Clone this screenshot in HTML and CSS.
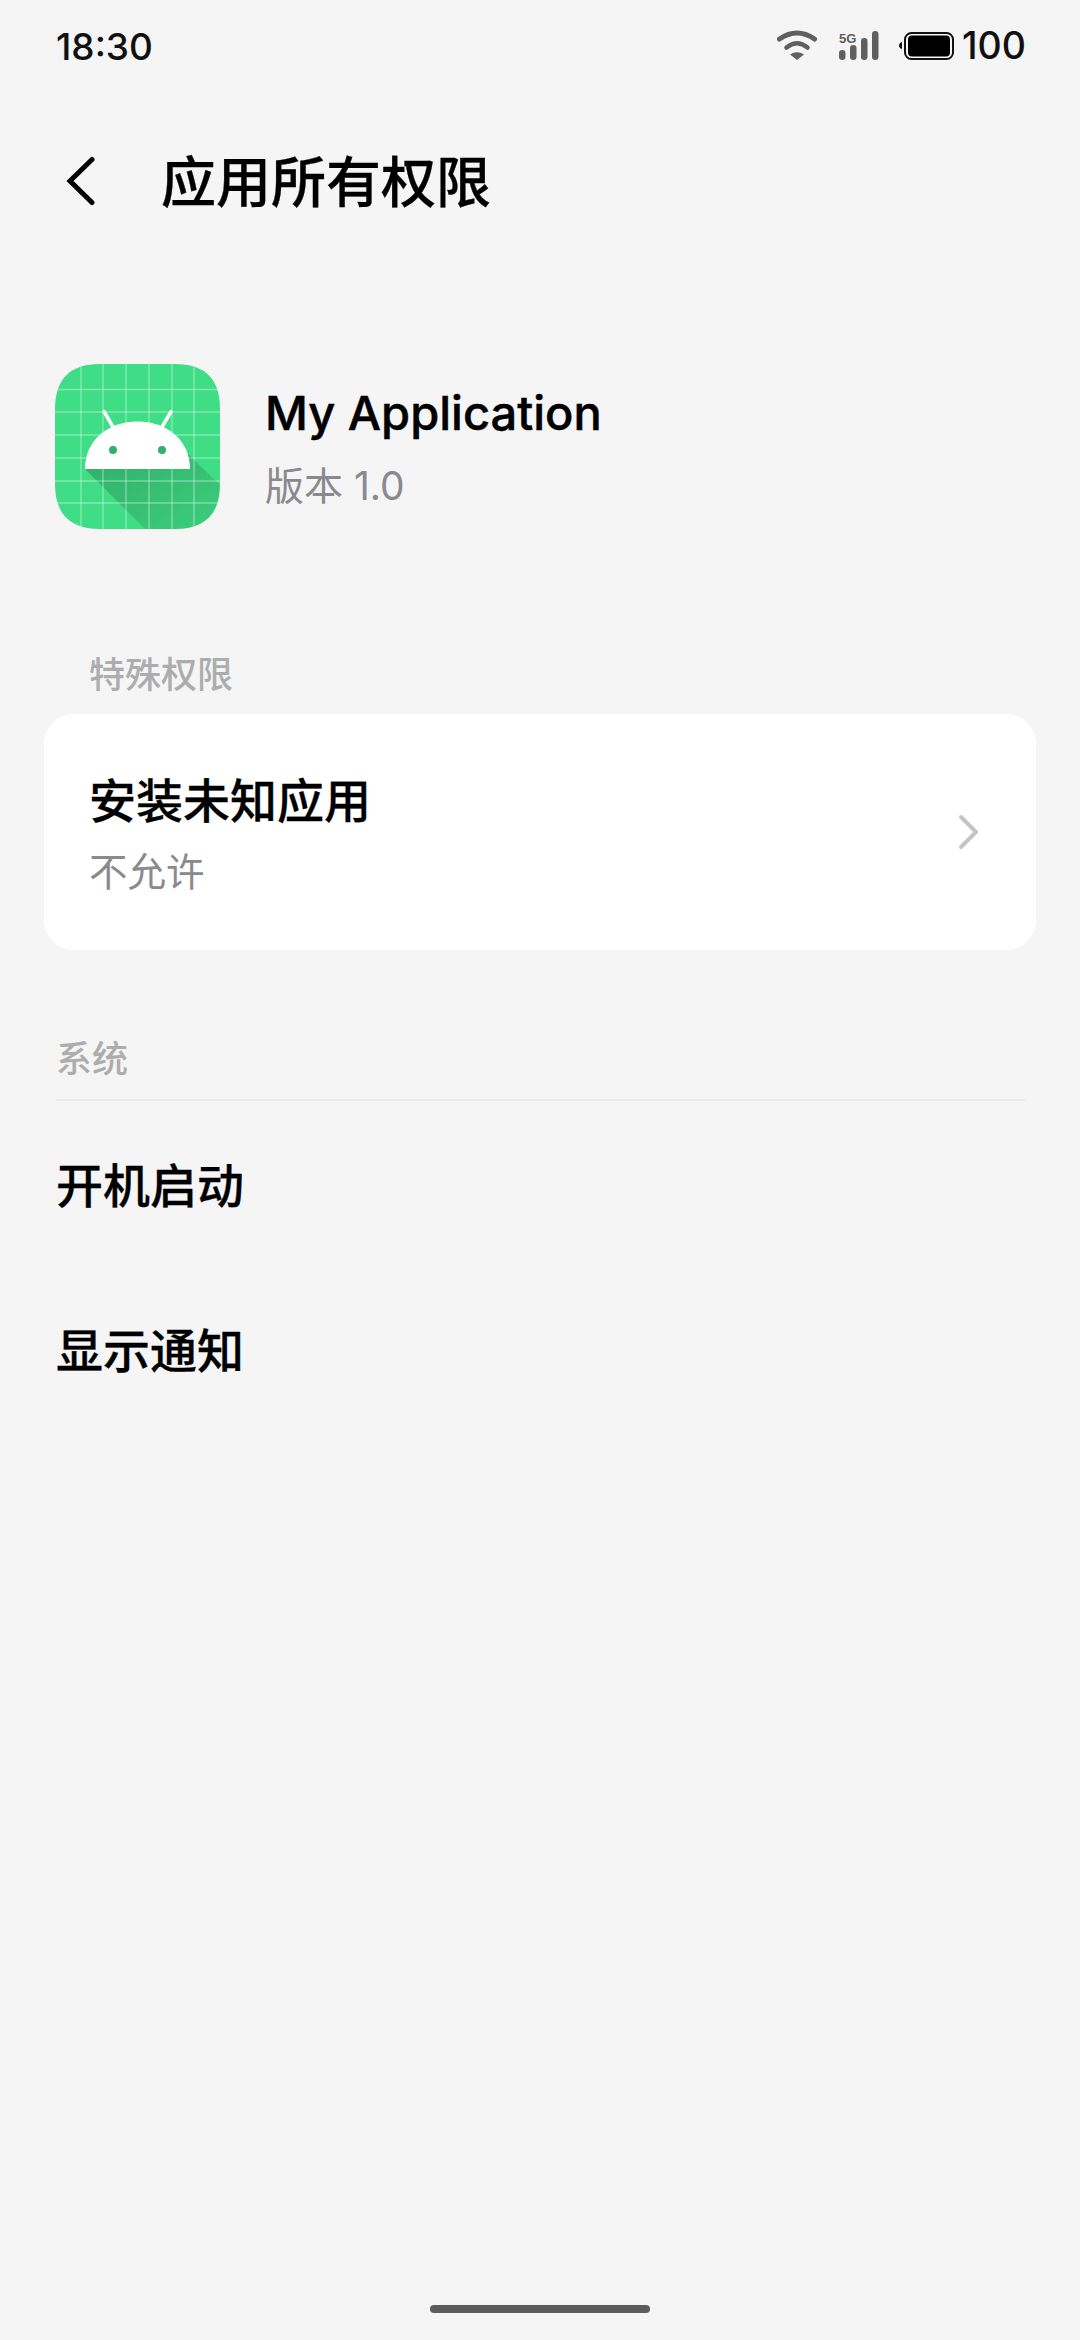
FILE: index.html
```html
<!DOCTYPE html>
<html lang="zh-CN">
<head>
<meta charset="utf-8">
<title>应用所有权限</title>
<link rel="stylesheet" href="styles.css">
</head>
<body>
<div class="page">
  <header class="status">
    <span class="time">18:30</span>
    <div class="status-right">
      <svg class="ic-wifi" width="40" height="30" viewBox="0 0 40 30"><path d="M2.500 9Q20 -3 37.500 9" fill="none" stroke="#5f5f5f" stroke-width="5" stroke-linecap="round"/><path d="M9.500 17.500Q20 9 30.500 17.500" fill="none" stroke="#5f5f5f" stroke-width="4.500" stroke-linecap="round"/><path d="M13 24.500Q20 20 27 24.500L20 30Z" fill="#5f5f5f"/></svg>
      <svg class="ic-signal" width="42" height="30" viewBox="0 0 42 30"><text x="1" y="12.500" class="fiveg">5G</text><rect x="1" y="20" width="6.500" height="10" rx="3.200" fill="#5f5f5f"/><rect x="12" y="15" width="6.500" height="15" rx="3.200" fill="#5f5f5f"/><rect x="23" y="8" width="6.500" height="22" rx="3.200" fill="#5f5f5f"/><rect x="34" y="1" width="6.500" height="29" rx="3.200" fill="#5f5f5f"/></svg>
      <svg class="ic-batt" width="56" height="30" viewBox="0 0 56 30"><path d="M4 12V19C2 18.500 1 17 1 15.500S2 12.500 4 12Z" fill="#111"/><rect x="7" y="3" width="48" height="26" rx="6.500" fill="none" stroke="#111" stroke-width="2"/><rect x="10" y="5.500" width="42" height="21" rx="4" fill="#000"/></svg>
      <span class="batt-num">100</span>
    </div>
  </header>

  <div class="toolbar">
    <svg class="back" width="30" height="50" viewBox="0 0 30 50"><path d="M27 3.500L5 25L27 46.500" fill="none" stroke="#000" stroke-width="5" stroke-linecap="round"/></svg>
    <h1 class="title">应用所有权限</h1>
  </div>

  <section class="app">
    <svg class="app-icon" width="165" height="165" viewBox="0 0 165 165">
      <defs>
        <clipPath id="sq"><path d="M45 0H120C150 0 165 15 165 45V120C165 150 150 165 120 165H45C15 165 0 150 0 120V45C0 15 15 0 45 0Z"/></clipPath>
        <linearGradient id="shade" x1="0.100" y1="0.100" x2="0.900" y2="0.900"><stop offset="0" stop-color="#000" stop-opacity=".2"/><stop offset="1" stop-color="#000" stop-opacity=".08"/></linearGradient>
      </defs>
      <g clip-path="url(#sq)">
        <rect width="165" height="165" fill="#3fdd86"/>
        <path d="M30 105L90 165H165V121L132 89Z" fill="url(#shade)"/>
        <g stroke="#fff" stroke-opacity=".35" stroke-width="1.500">
          <path d="M26 0V165M48 0V165M71 0V165M94 0V165M117 0V165M139 0V165"/>
          <path d="M0 25.500H165M0 48H165M0 71H165M0 94H165M0 117H165M0 139H165"/>
        </g>
      </g>
      <path d="M30 105C30 76 53 57.500 82.500 57.500S135 76 135 105Z" fill="#fff"/>
      <path d="M49 47.500L58 63M116 47.500L107 63" stroke="#fff" stroke-width="3.500" stroke-linecap="round"/>
      <circle cx="58" cy="86" r="4" fill="#2eb06f"/>
      <circle cx="107" cy="86" r="4" fill="#2eb06f"/>
    </svg>
    <div class="app-text">
      <div class="app-name">My Application</div>
      <div class="app-ver">版本 1.0</div>
    </div>
  </section>

  <div class="label label-card">特殊权限</div>
  <div class="card">
    <div class="card-text">
      <div class="row-title">安装未知应用</div>
      <div class="row-sub">不允许</div>
    </div>
    <svg class="chev" width="22" height="38" viewBox="0 0 22 38"><path d="M3 4L18 19L3 34" fill="none" stroke="#c4c4c4" stroke-width="4" stroke-linecap="round" stroke-linejoin="round"/></svg>
  </div>

  <div class="label label-sys">系统</div>
  <div class="rows">
    <div class="row">开机启动</div>
    <div class="row">显示通知</div>
  </div>

  <div class="spacer"></div>
  <div class="home"></div>
</div>
</body>
</html>
```

FILE: styles.css
```css
* { box-sizing: border-box; margin: 0; padding: 0; }
html, body { width: 1080px; height: 2340px; background: #f5f5f5; overflow: hidden; }
body { font-family: Inter, "Noto Sans CJK SC", sans-serif; color: #000; }
.page { width: 1080px; height: 2340px; display: flex; flex-direction: column; }
.status { height: 90px; padding: 25px 54px 0 56px; display: flex; justify-content: space-between; align-items: flex-start; }
.time { font-size: 37px; line-height: 44px; font-weight: 500; color: #111; }
.status-right { display: flex; align-items: center; height: 40px; }
.ic-wifi { margin-right: 21px; }
.ic-signal { margin-right: 18px; }
.ic-batt { margin-right: 8px; }
.batt-num { font-size: 37.500px; line-height: 44px; font-weight: 500; color: #111; margin-top: 2px; }
.fiveg { font-family: "Liberation Sans", sans-serif; font-size: 13px; font-weight: 700; fill: #5f5f5f; }
.toolbar { height: 100px; padding-left: 65px; display: flex; align-items: center; margin-top: 41px; }
.back { margin-right: 66px; flex: none; }
.title { font-size: 55px; line-height: 76px; font-weight: 500; -webkit-text-stroke: 0.3px #000; margin-top: 2px; }
.app { margin-top: 133px; height: 165px; padding-left: 55px; display: flex; align-items: center; }
.app-icon { flex: none; margin-right: 45px; }
.app-name { font-size: 47px; line-height: 62px; font-weight: 500; -webkit-text-stroke: 0.5px #000; }
.app-ver { font-size: 39px; line-height: 52px; color: #8a8a8e; margin-top: 16px; }
.label { font-size: 36px; line-height: 50px; color: #adadad; font-weight: 500; }
.label-card { margin-top: 121px; padding-left: 89px; }
.card { margin: 14px 44px 0; height: 236px; background: #fff; border-radius: 30px; display: flex; align-items: center; justify-content: space-between; padding: 0 56px 0 45px; }
.card-text { padding-top: 3px; }
.row-title { font-size: 47px; line-height: 62px; font-weight: 500; -webkit-text-stroke: 0.3px #000; }
.row-sub { font-size: 38.500px; line-height: 52px; color: #8a8a8e; margin-top: 14px; }
.label-sys { margin: 84px 55px 0 56px; height: 67px; border-bottom: 2px solid #ebebeb; }
.rows { display: flex; flex-direction: column; margin-top: -1px; }
.row { height: 165px; padding-left: 56px; font-size: 47px; font-weight: 500; -webkit-text-stroke: 0.3px #000; display: flex; align-items: center; }
.spacer { flex: 1; }
.home { width: 220px; height: 8px; border-radius: 4px; background: #5c5c5c; margin: 0 auto 27px; }
```
